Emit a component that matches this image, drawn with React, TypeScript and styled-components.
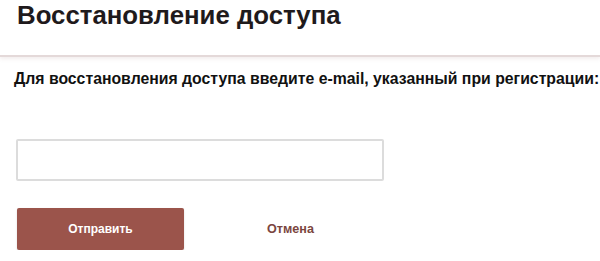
import React from "react";
import styled, { createGlobalStyle } from "styled-components";

const Global = createGlobalStyle`
	html, body {
		margin: 0;
		padding: 0;
		background: #fff;
	}
	body {
		font-family: "Liberation Sans", Arial, sans-serif;
		color: #1e1e1e;
	}
`;

const Header = styled.header`
	height: 55px;
	padding: 0 17px;
	border-bottom: 2px solid #e4d9d9;
	box-shadow: 0 2px 4px rgba(150, 110, 110, 0.12);
	h1 {
		margin: 0;
		padding-top: 1px;
		font-size: 25.8px;
		font-weight: 700;
		line-height: 28px;
		color: #1f1a1c;
	}
`;

const Form = styled.form`
	padding: 13px 0 0 14px;
	display: flex;
	flex-direction: column;
`;

const Lead = styled.p`
	margin: 0;
	font-size: 15.8px;
	font-weight: 700;
	line-height: 18px;
	color: #111;
	white-space: nowrap;
`;

const Field = styled.input`
	box-sizing: border-box;
	margin: 51px 0 0 2px;
	width: 368px;
	height: 42px;
	border: 2px solid #dcdcdc;
	border-radius: 2px;
	padding: 0 12px;
	font: inherit;
	outline: none;
`;

const Actions = styled.div`
	display: flex;
	align-items: center;
	margin: 27px 0 0 3px;
`;

const Button = styled.button<{ $primary?: boolean }>`
	box-sizing: border-box;
	width: ${(p) => (p.$primary ? "167px" : "auto")};
	height: 42px;
	padding: 0;
	border: none;
	border-radius: 2px;
	font-family: "Liberation Sans", Arial, sans-serif;
	font-size: ${(p) => (p.$primary ? "12px" : "12.6px")};
	font-weight: 700;
	cursor: pointer;
	background: ${(p) => (p.$primary ? "#9b544b" : "transparent")};
	color: ${(p) => (p.$primary ? "#fff" : "#7b4640")};
	box-shadow: ${(p) => (p.$primary ? "0 1px 2px rgba(0,0,0,0.15)" : "none")};
	margin-right: ${(p) => (p.$primary ? "83px" : "0")};
`;

const App = () => {
	return (
		<>
			<Global />
			<Header>
				<h1>Восстановление доступа</h1>
			</Header>
			<Form onSubmit={(e) => e.preventDefault()}>
				<Lead>Для восстановления доступа введите e-mail, указанный при регистрации:</Lead>
				<Field type='email' />
				<Actions>
					<Button $primary type='submit'>
						Отправить
					</Button>
					<Button type='button'>Отмена</Button>
				</Actions>
			</Form>
		</>
	);
};

export default App;
